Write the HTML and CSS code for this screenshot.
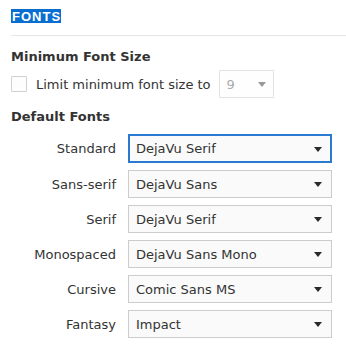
FILE: index.html
```html
<!DOCTYPE html>
<html>
<head>
<meta charset="utf-8">
<link rel="stylesheet" href="styles.css">
</head>
<body>
<div class="page">
  <div class="title"><span class="sel">FONTS</span></div>
  <div class="divider"></div>
  <h2 class="section">Minimum Font Size</h2>
  <div class="minrow">
    <span class="checkbox"></span>
    <span class="minlabel">Limit minimum font size to</span>
    <div class="smallselect"><span class="val">9</span><span class="arrow grey"></span></div>
  </div>
  <h2 class="section second">Default Fonts</h2>
  <div class="grid">
    <div class="label">Standard</div>
    <div class="select focus"><span>DejaVu Serif</span><span class="arrow"></span></div>
    <div class="label">Sans-serif</div>
    <div class="select"><span>DejaVu Sans</span><span class="arrow"></span></div>
    <div class="label">Serif</div>
    <div class="select"><span>DejaVu Serif</span><span class="arrow"></span></div>
    <div class="label">Monospaced</div>
    <div class="select"><span>DejaVu Sans Mono</span><span class="arrow"></span></div>
    <div class="label">Cursive</div>
    <div class="select"><span>Comic Sans MS</span><span class="arrow"></span></div>
    <div class="label">Fantasy</div>
    <div class="select"><span>Impact</span><span class="arrow"></span></div>
  </div>
</div>
</body>
</html>
```
FILE: styles.css
```css
html, body {
  margin: 0;
  padding: 0;
  background: #ffffff;
}
body {
  font-family: "DejaVu Sans", sans-serif;
  font-size: 13px;
  color: #333333;
}
.page {
  padding: 9px 0 0 11px;
}
.title {
  height: 14px;
  line-height: 14px;
}
.sel {
  display: inline-block;
  background: #0a6ed1;
  color: #ffffff;
  font-family: "Liberation Sans", Arial, sans-serif;
  font-weight: bold;
  font-size: 13px;
  letter-spacing: 1px;
  height: 14px;
  line-height: 15px;
  width: 50px;
  padding-left: 1px;
  box-sizing: border-box;
  overflow: hidden;
  white-space: nowrap;
}
.divider {
  margin-top: 12px;
  height: 1px;
  background: #e6e6e6;
}
.section {
  margin: 13px 0 0 0;
  font-size: 13px;
  font-weight: bold;
  line-height: 16px;
  color: #333333;
}
.section.second {
  margin-top: 11px;
}
.minrow {
  display: flex;
  align-items: center;
  margin-top: 5px;
  height: 28px;
}
.checkbox {
  width: 14px;
  height: 14px;
  border: 1px solid #d0d0d0;
  background: #fdfdfd;
  border-radius: 1px;
}
.minlabel {
  margin-left: 9px;
}
.smallselect {
  margin-left: 8px;
  border: 1px solid #e2e2e2;
  display: flex;
  align-items: center;
  justify-content: space-between;
  padding: 0 7px 0 7px;
  box-sizing: border-box;
  width: 55px;
  height: 28px;
  color: #aaaaaa;
  background: #fefefe;
}
.arrow {
  width: 0;
  height: 0;
  border-left: 4px solid transparent;
  border-right: 4px solid transparent;
  border-top: 5px solid #2a2a2a;
  margin-top: 1px;
}
.arrow.grey {
  border-top-color: #999999;
  border-left-width: 4.5px;
  border-right-width: 4.5px;
}
.grid {
  display: grid;
  grid-template-columns: 105px 204px;
  column-gap: 12px;
  row-gap: 7px;
  margin-top: 9px;
  align-items: center;
}
.label {
  text-align: right;
}
.select {
  height: 28px;
  box-sizing: border-box;
  border: 1px solid #cccccc;
  background: #fafafa;
  display: flex;
  align-items: center;
  justify-content: space-between;
  padding: 0 9px 0 7px;
}
.select.focus {
  border: 2px solid #2a7ad2;
  padding: 0 8px 0 6px;
  height: 29px;
}
```
